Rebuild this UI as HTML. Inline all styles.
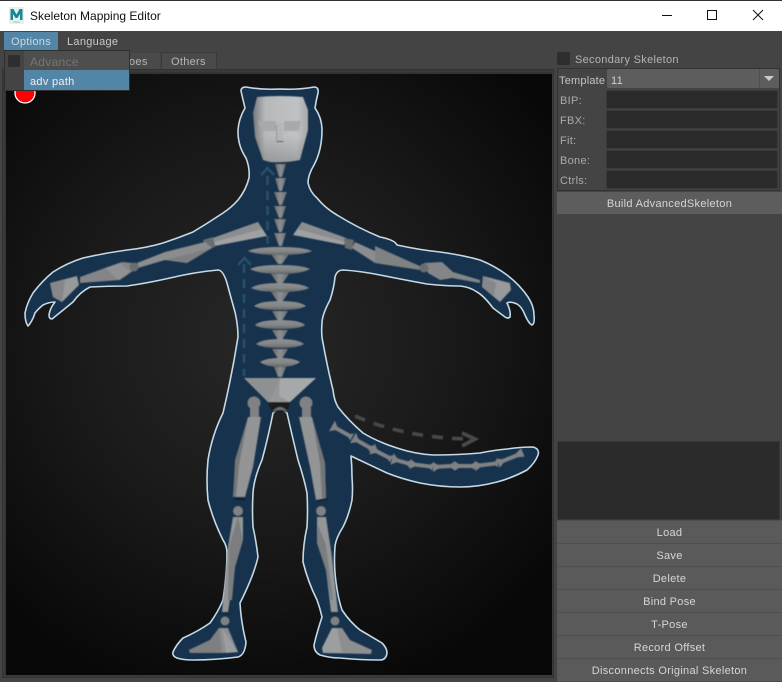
<!DOCTYPE html>
<html><head><meta charset="utf-8"><style>
html,body{margin:0;padding:0;background:#444}
#w{position:relative;width:782px;height:682px;overflow:hidden;background:#444;font-family:"Liberation Sans",sans-serif;font-size:11px;color:#c4c4c4}
#w div{position:absolute;box-sizing:border-box}
.t{white-space:nowrap;line-height:14px;letter-spacing:.3px}
.f{left:606px;width:172px;height:19px;background:#2b2b2b;border-radius:2px;border:1px solid #393939}
.l{left:560px;color:#aaa}
.b{left:557px;width:225px;height:22px;background:#5a5a5a;text-align:center;line-height:24px;color:#d6d6d6;letter-spacing:.3px;white-space:nowrap}
svg{position:absolute}
</style></head><body><div id="w">
<div style="left:0;top:0;width:782px;height:31px;background:#fff;border-top:1px solid #333"></div>
<svg style="left:9px;top:7px" width="16" height="18" viewBox="0 0 16 18"><rect x="0" y="0" width="15" height="17" fill="#e3f1f1"/><path d="M1.500 13V2h3L7.500 7.500 10.500 2h3v11h-2.500V7L8.500 11h-2L4 7v6z" fill="#1c8791"/><path d="M4 15h7" stroke="#9cc5c8" stroke-width="1"/></svg>
<div class="t" style="left:30px;top:9px;color:#111;font-size:12px;letter-spacing:0">Skeleton Mapping Editor</div>
<svg style="left:655px;top:5px" width="120" height="20" fill="none" stroke="#111" stroke-width="1"><path d="M7 10.500H17"/><rect x="52.500" y="5.500" width="9" height="9"/><path d="M98 5l10 10M108 5L98 15"/></svg>

<div style="left:4px;top:32px;width:54px;height:18px;background:#5285a6"></div>
<div class="t" style="left:11px;top:35px;color:#d0d8de">Options</div>
<div class="t" style="left:67px;top:35px;color:#c8c8c8">Language</div>

<div style="left:129px;top:53px;width:31px;height:17px;background:#4a4a4a"></div>
<div class="t" style="left:129px;top:55px;color:#b5b5b5">oes</div>
<div style="left:161px;top:52px;width:56px;height:18px;background:#4a4a4a;border:1px solid #3a3a3a;border-bottom:0"></div>
<div class="t" style="left:171px;top:55px;color:#b5b5b5">Others</div>

<div style="left:2px;top:69px;width:552px;height:609px;background:#3a3a3a;border:1px solid #333"></div>
<div style="left:5px;top:72px;width:547px;height:603px;background:#333"></div>

<svg style="left:6px;top:74px" width="546" height="601" viewBox="6 74 546 601">
<defs>
<radialGradient id="bg" gradientUnits="userSpaceOnUse" cx="260" cy="340" r="370">
<stop offset="0" stop-color="#272727"/><stop offset=".5" stop-color="#1a1a1a"/><stop offset="1" stop-color="#080808"/></radialGradient>
<linearGradient id="hd" x1="0" x2="1" y1="0" y2="0"><stop offset="0" stop-color="#77797c"/><stop offset=".22" stop-color="#b6b8ba"/><stop offset=".8" stop-color="#c0c2c4"/><stop offset="1" stop-color="#a6a8aa"/></linearGradient>
<linearGradient id="hd2" x1="0" x2="0" y1="0" y2="1"><stop offset=".6" stop-color="#000" stop-opacity="0"/><stop offset="1" stop-color="#000" stop-opacity=".18"/></linearGradient>
<linearGradient id="v" x1="0" x2="0" y1="0" y2="1"><stop offset="0" stop-color="#8e9092"/><stop offset=".55" stop-color="#848688"/><stop offset="1" stop-color="#636567"/></linearGradient>
<linearGradient id="h" x1="0" x2="1" y1="0" y2="0"><stop offset="0" stop-color="#686a6c"/><stop offset=".5" stop-color="#8c8e90"/><stop offset="1" stop-color="#6a6c6e"/></linearGradient>
<filter id="gl" x="-5%" y="-5%" width="110%" height="110%"><feGaussianBlur stdDeviation=".35"/></filter>
<filter id="sf" x="-5%" y="-5%" width="110%" height="110%"><feGaussianBlur stdDeviation=".45"/></filter>
</defs>
<rect x="6" y="74" width="546" height="601" fill="url(#bg)"/>
<path id="body" filter="url(#gl)" fill="#12324d" stroke="#c6d9e4" stroke-width="1.600" stroke-linejoin="round" d="M241 91 Q241 87 246 87 Q262 90 280 89 Q298 90 314 87 Q319 87 318 93 Q316 101 315 108 Q322 118 322 130 Q322 150 314 165 Q308 175 308 183 Q310 192 317 198 Q325 208 337 215 Q358 228 380 237 Q395 240 397 245 Q420 250 440 252 Q462 255 480 260 Q495 266 507 275 Q520 285 528 297 Q534 306 534 315 Q535 324 532 325 Q529 324 525 315 Q522 307 517 304 Q510 301 507 303 Q511 311 510 317 Q508 319 505 317 L493 308 Q484 296 477 292 Q470 287 460 286 Q445 286 427 284 Q405 280 380 275 Q360 271 343 270 Q337 270 335 277 Q334 288 330 300 Q322 315 322 323 Q321 335 323 343 Q328 370 333 390 Q334 400 338 407 Q348 420 363 433 Q378 442 397 448 Q415 454 433 455 Q458 455 480 453 Q495 450 507 449 Q520 447 533 447 Q540 449 538 455 Q535 463 527 470 Q512 478 497 482 Q478 487 460 487 Q440 487 420 483 Q402 479 387 473 L351 456 Q352 466 352 477 Q353 490 352 500 Q349 515 343 527 Q336 538 335 546 Q334 560 335 573 Q337 595 342 610 Q350 622 360 630 Q372 637 382 643 Q387 648 387 653 Q386 660 380 660 Q360 660 340 658 Q330 658 320 655 Q314 652 314 645 Q317 632 322 617 Q320 608 317 600 Q308 582 303 562 Q303 545 307 527 Q308 510 307 493 Q304 478 298 460 Q292 435 287 413 Q280 407 273 413 Q268 438 262 460 Q254 478 253 493 Q252 510 253 527 Q256 540 258 557 Q254 575 240 603 Q241 622 246 642 Q245 655 238 657 Q215 660 193 660 Q183 660 177 658 Q172 656 173 652 Q176 645 183 638 Q197 632 210 623 Q218 612 223 600 Q227 575 227 553 Q227 546 223 540 Q213 520 208 500 Q206 480 208 460 Q212 435 223 413 Q232 375 238 337 Q238 325 235 312 Q231 298 227 283 Q223 270 218 270 Q195 272 170 278 Q148 283 127 286 Q108 286 90 287 Q80 292 73 302 Q62 311 52 319 Q49 319 49 315 Q50 308 55 302 Q49 302 43 305 Q38 309 35 313 Q32 322 28 326 Q25 322 25 313 Q27 303 33 293 Q42 281 53 272 Q67 263 83 258 Q105 253 127 250 Q146 248 163 243 Q178 238 193 232 Q208 223 223 213 Q232 207 238 200 Q246 190 249 178 Q250 168 246 158 Q238 146 238 132 Q238 120 245 108 Q243 100 241 91 Z"/>

<!-- arrows -->
<g fill="none" stroke="#2c4f69" stroke-width="2.600" filter="url(#sf)">
<path d="M267.500 176V244" stroke-dasharray="9 6"/>
<path d="M261 175L267.500 168L274 175" />
<path d="M244 264V376" stroke-dasharray="9 6"/>
<path d="M238 265L244.500 258L251 265"/>
</g>
<g fill="none" stroke="#484848" stroke-width="3.600" filter="url(#sf)">
<path d="M355 416Q405 438 470 439" stroke-dasharray="11 9"/>
<path d="M462 433L475 439L462 446" stroke-width="3.800"/>
</g>

<g filter="url(#sf)">
<!-- head -->
<path d="M257 97Q280 95 303 97L308 110V130L300 160Q285 163 270 162L263 160L255 137L253 113Z" fill="url(#hd)"/>
<path d="M257 97Q280 95 303 97L308 110V130L300 160Q285 163 270 162L263 160L255 137L253 113Z" fill="url(#hd2)"/>
<path d="M258 121H276V131H261Z M284 121H301L299 131H284Z" fill="#a7a9ab"/>
<path d="M277 123H283V141H277Z" fill="#b4b6b8"/><path d="M276.500 141.500H283.500" stroke="#4a4a4a" stroke-width="1"/><path d="M276.500 125V141" stroke="#8f9193" stroke-width=".8"/>

<!-- neck/spine cones -->
<g fill="url(#h)">
<path d="M275 164H286L282 177H279Z"/><path d="M275 178H286L282 191H279Z"/><path d="M274 192H287L282 205H279Z"/><path d="M274 206H286L282 218H279Z"/><path d="M274 219H286L282 232H279Z"/><path d="M274 233H286L282 246H279Z"/>
<path d="M271 254H289L282 264H278Z"/><path d="M271 274H289L282 284H278Z"/><path d="M271 292H289L282 302H278Z"/><path d="M272 311H288L282 321H278Z"/><path d="M272 330H288L282 340H278Z"/><path d="M272 349H288L282 359H278Z"/><path d="M274 367H286L282 377H278Z"/>
</g>
<!-- ribs -->
<g fill="url(#v)">
<path d="M248 251Q256 247 280 247Q304 247 312 251Q304 255 280 255Q256 255 248 251Z"/>
<path d="M250 269Q258 265 280 265Q302 265 310 269Q302 274 280 274Q258 274 250 269Z"/>
<path d="M251 288Q258 283 280 283Q302 283 309 288Q302 292 280 292Q258 292 251 288Z"/>
<path d="M254 306Q260 301 280 301Q300 301 306 306Q300 310 280 310Q260 310 254 306Z"/>
<path d="M255 325Q260 320 280 320Q300 320 305 325Q300 329 280 329Q260 329 255 325Z"/>
<path d="M256 344Q262 339 280 339Q298 339 304 344Q298 348 280 348Q262 348 256 344Z"/>
<path d="M260 362Q266 358 280 358Q294 358 300 362Q294 367 280 367Q266 367 260 362Z"/>
</g>
<!-- pelvis -->
<path d="M244 378H316L290 402H268Z" fill="#959799"/>
<path d="M280 378L316 378L290 402L279 396Z" fill="#a6a8aa"/><path d="M268 402L244 378H280L272 396Z" fill="#8e9092"/>
<path d="M268 402H290L287 412H272Z" fill="#1a1a1a"/><path d="M272 412Q280 402 288 412Q280 408 272 412Z" fill="#6d6f71"/>

<!-- legs -->
<g fill="#7f8183">
<circle cx="254" cy="403" r="6.500"/><circle cx="306" cy="403" r="6.500"/>
<path d="M250 408H259V418H250Z"/><path d="M302 408H311V418H302Z"/>
<circle cx="238" cy="511" r="5"/><circle cx="321" cy="511" r="5"/>
<circle cx="225" cy="621" r="4.500"/><circle cx="335" cy="621" r="4.500"/>
</g>
<path d="M248 417H261L253 467L245 497H233L235 467Z" fill="#929496"/><path d="M248 417L235 460L233 497H236L239 465Z" fill="#737577"/>
<path d="M299 417H312L325 463L326 498L316 500L310 467Z" fill="#929496"/><path d="M312 417L325 463L326 498H322L320 463Z" fill="#737577"/>
<path d="M234 498L245 500" stroke="#111" stroke-width="1"/><path d="M316 501L327 499" stroke="#111" stroke-width="1"/>
<path d="M233 517H243L243 540L235 567L228 612H222L228 547Z" fill="#939597"/><path d="M238 517L243 540L235 567L232 600H228L229 547Z" fill="#7b7d7f"/>
<path d="M317 517H326L332 557L338 612H331L326 570L317 543Z" fill="#939597"/><path d="M318 525L317 543L326 570L331 600H333L326 545Z" fill="#7b7d7f"/>
<path d="M222 613L230 615M331 615L339 613" stroke="#222" stroke-width="1"/>
<path d="M219 628H228L238 652L222 653H190L189 650L210 640Z" fill="#8c8e90"/><path d="M219 628L222 653H190L189 650L210 640Z" fill="#7d7f81"/><path d="M222 628L238 652L226 653Z" fill="#9c9ea0"/>
<path d="M332 628H342L350 640L372 650L371 654L323 653L322 648Z" fill="#8c8e90"/><path d="M337 628L342 653L323 653L322 648L332 628Z" fill="#9c9ea0"/>

<!-- arms -->
<path d="M258 222L267 236L215 246L213 238Z" fill="#9fa1a3"/><path d="M258 222L262 229L214 242L213 238Z" fill="#8b8d8f"/>
<path d="M302 222L293 235L344 245L346 238Z" fill="#9fa1a3"/><path d="M302 222L297 229L345 242L346 238Z" fill="#8b8d8f"/>
<path d="M203 240L213 237L215 247L206 250Z" fill="#6b6d6f"/><path d="M344 238L354 240L352 250L345 248Z" fill="#6b6d6f"/>
<path d="M205 242L212 248L187 263L165 260L138 268L137 263L165 252Z" fill="#8a8c8e"/><path d="M212 248L187 263L165 260Z" fill="#7d7f81"/>
<path d="M355 242L395 260L375 263L352 248Z" fill="#8a8c8e"/><path d="M375 246L395 255L422 267L420 270L375 263Z" fill="#7f8183"/>
<path d="M132 263L122 262L105 268L80 277V283L120 280L130 273L137 268Z" fill="#838587"/><path d="M105 268L120 263L130 272L118 280Z" fill="#8f9193"/>
<path d="M424 263L442 262L453 272L480 280V283L452 278L440 280L428 273Z" fill="#838587"/>
<circle cx="134" cy="267" r="4.500" fill="#6b6d6f"/><circle cx="424" cy="268" r="4.500" fill="#6b6d6f"/>
<path d="M50 283L77 276L79 285L62 302L53 297Z" fill="#98999b"/><path d="M50 283L65 280L62 302L53 297Z" fill="#85878a"/>
<path d="M483 276L510 283L511 290L500 302L482 287Z" fill="#98999b"/><path d="M483 276L496 283L494 296L482 287Z" fill="#85878a"/>

<!-- tail -->
<g fill="#808284">
<path transform="translate(332 426) rotate(29)" d="M0 -6L5 -2L20 -2L23 -4V4L20 2L5 2L0 6Z"/>
<path transform="translate(353 438) rotate(30)" d="M0 -6L5 -2L19 -2L22 -4V4L19 2L5 2L0 6Z"/>
<path transform="translate(372 449) rotate(27)" d="M0 -6L5 -2L19 -2L22 -4V4L19 2L5 2L0 6Z"/>
<path transform="translate(392 459) rotate(15)" d="M0 -6L5 -2L16 -2L19 -4V4L16 2L5 2L0 6Z"/>
<path transform="translate(410 464) rotate(7)" d="M0 -5L5 -2L20 -2L23 -4V4L20 2L5 2L0 5Z"/>
<path transform="translate(433 467) rotate(-3)" d="M0 -5L5 -2L18 -2L21 -4V4L18 2L5 2L0 5Z"/>
<path transform="translate(454 466)" d="M0 -5L5 -2L18 -2L21 -4V4L18 2L5 2L0 5Z"/>
<path transform="translate(475 466) rotate(-7)" d="M0 -5L5 -2L20 -2L23 -4V4L20 2L5 2L0 5Z"/>
<path transform="translate(498 463) rotate(-22)" d="M0 -5L5 -2L20 -2L27 -5V4L20 2L5 2L0 5Z"/>
</g>
</g>

<circle cx="25" cy="93" r="10" fill="#f00" stroke="#fff" stroke-width="1.300"/>
</svg>

<!-- dropdown -->
<div style="left:4px;top:50px;width:126px;height:41px;background:#444;border:1px solid #2e2e2e"></div>
<div style="left:24px;top:51px;width:105px;height:19px;background:#4e4e4e"></div>
<div style="left:24px;top:70px;width:105px;height:20px;background:#5285a6"></div>
<div style="left:8px;top:55px;width:12px;height:12px;background:#2e2e2e;border-radius:2px"></div>
<div class="t" style="left:30px;top:55px;color:#757575;font-size:12px">Advance</div>
<div class="t" style="left:30px;top:75px;color:#f0f0f0">adv path</div>

<!-- right panel -->
<div style="left:557px;top:52px;width:13px;height:13px;background:#2e2e2e;border-radius:2px"></div>
<div class="t" style="left:575px;top:53px;color:#b4b4b4">Secondary Skeleton</div>
<div style="left:557px;top:68px;width:223px;height:123px;border:1px solid #333;background:#444"></div>
<div class="t" style="left:559px;top:74px;color:#c4c4c4;letter-spacing:.2px">Template</div>
<div style="left:607px;top:69px;width:172px;height:19px;background:#5d5d5d;border-radius:2px"></div>
<div style="left:759px;top:69px;width:1px;height:19px;background:#505050"></div>
<svg style="left:763px;top:75px" width="12" height="8"><path d="M1 1H11L6 6Z" fill="#ccc"/></svg>
<div class="t" style="left:611px;top:74px;color:#d0d0d0">11</div>
<div class="f" style="top:90px"></div><div class="f" style="top:110px"></div><div class="f" style="top:130px"></div><div class="f" style="top:150px"></div><div class="f" style="top:170px"></div>
<div class="t l" style="top:94px">BIP:</div><div class="t l" style="top:114px">FBX:</div><div class="t l" style="top:134px">Fit:</div><div class="t l" style="top:154px">Bone:</div><div class="t l" style="top:174px">Ctrls:</div>
<div class="b" style="top:192px;background:#5d5d5d">Build AdvancedSkeleton</div>
<div style="left:557px;top:441px;width:223px;height:79px;background:#2b2b2b;border:1px solid #383838"></div>
<div style="left:557px;top:520px;width:225px;height:162px;background:#4f4f4f"></div>
<div class="b" style="top:521px">Load</div>
<div class="b" style="top:544px">Save</div>
<div class="b" style="top:567px">Delete</div>
<div class="b" style="top:590px">Bind Pose</div>
<div class="b" style="top:613px">T-Pose</div>
<div class="b" style="top:636px">Record Offset</div>
<div class="b" style="top:659px">Disconnects Original Skeleton</div>
</div></body></html>
